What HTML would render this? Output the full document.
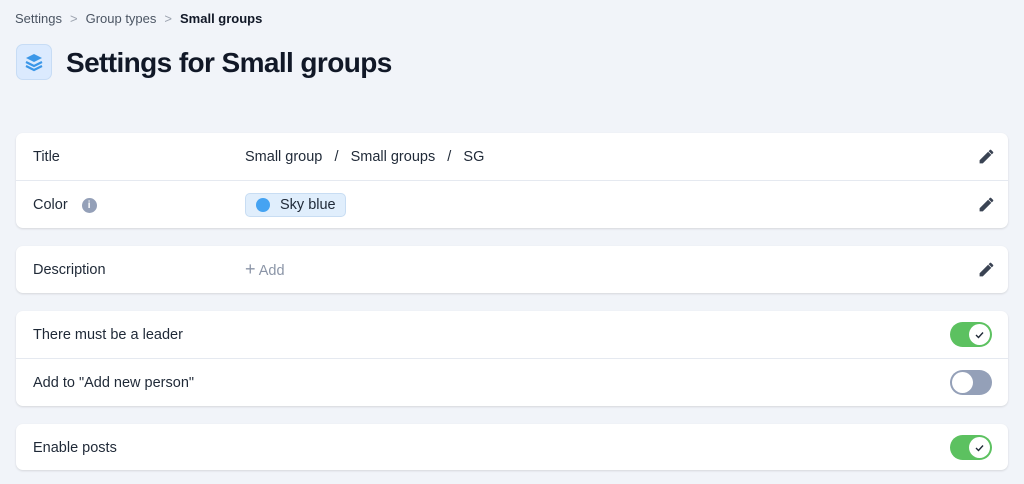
<!DOCTYPE html>
<html><head><meta charset="utf-8"><style>
body{margin:0;width:1024px;height:484px;background:#f1f4f9;font-family:"Liberation Sans",sans-serif;color:#1f2937;position:relative;overflow:hidden}
.bc{position:absolute;left:15px;top:11px;font-size:13px;color:#4b5563}
.bc b{color:#111827}
.bc span.s{color:#9ca3af;margin:0 8px}
.ic{position:absolute;left:16px;top:44px;width:36px;height:36px;border-radius:7px;background:#dbeafe;border:1px solid #c7dcf5;box-sizing:border-box}
h1{position:absolute;left:66px;top:47px;margin:0;font-size:28px;font-weight:bold;color:#111827;letter-spacing:-0.6px}
.card{position:absolute;left:16px;width:992px;background:#fff;border-radius:7px;box-shadow:0 1px 2px rgba(0,0,0,.12)}
.row{height:47px;position:relative;font-size:14.5px;border-top:1px solid #e5e9f0}
.row:first-child{border-top:none}
.l{position:absolute;left:17px;top:16px}
.v{position:absolute;left:229px;top:16px}
.pen{position:absolute;right:13px;top:15px}
.tg{position:absolute;right:16px;top:11px;width:42px;height:25px;border-radius:13px;background:#5cc160}
.tg i{position:absolute;right:2px;top:2px;width:21px;height:21px;border-radius:50%;background:#fff}
.tg.off{background:#94a0b8}.tg.off i{left:2px;right:auto}
.chip{position:absolute;left:229px;top:12px;height:22px;padding:0 9px 0 34px;border-radius:5px;background:#e0eefc;border:1px solid #c8ddf3;line-height:22px;color:#1f2937}
.chip:before{content:"";position:absolute;left:10px;top:4px;width:14px;height:14px;border-radius:50%;background:#45a3f2}
</style></head><body>
<div class="bc">Settings<span class="s">&gt;</span>Group types<span class="s">&gt;</span><b>Small groups</b></div>
<div class="ic"><svg width="34" height="34" viewBox="0 0 34 34" style="position:absolute;left:0;top:0"><path d="M17 9l8 4-8 4-8-4z" fill="#3b97e8"/><path d="M9 17l8 4 8-4" stroke="#3b97e8" stroke-width="2.2" fill="none"/><path d="M9 21l8 4 8-4" stroke="#3b97e8" stroke-width="2.2" fill="none"/></svg></div>
<h1>Settings for Small groups</h1>
<svg width="0" height="0" style="position:absolute"><defs><symbol id="p" viewBox="0 0 16 16"><path d="M1.5 11.5V14.5h3l8-8-3-3zM14.2 4.8a.8.8 0 000-1.1l-1.9-1.9a.8.8 0 00-1.1 0L10 3l3 3z" fill="#3a4353"/></symbol></defs></svg>
<div class="card" style="top:133px">
<div class="row"><span class="l">Title</span><span class="v">Small group &nbsp;&nbsp;/&nbsp;&nbsp; Small groups &nbsp;&nbsp;/&nbsp;&nbsp; SG</span><svg class="pen" width="17" height="17"><use href="#p"/></svg></div>
<div class="row"><span class="l">Color <span style="display:inline-block;width:15px;height:15px;border-radius:50%;background:#94a0b8;color:#fff;font-size:10px;text-align:center;line-height:15px;font-weight:bold;margin-left:10px;vertical-align:1px">i</span></span><span class="chip">Sky blue</span><svg class="pen" width="17" height="17"><use href="#p"/></svg></div>
</div>
<div class="card" style="top:246px">
<div class="row"><span class="l">Description</span><span class="v" style="color:#8b95a7"><span style="font-size:18px;line-height:14px">+</span> Add</span><svg class="pen" width="17" height="17"><use href="#p"/></svg></div>
</div>
<div class="card" style="top:311px">
<div class="row"><span class="l">There must be a leader</span><div class="tg"><i><svg width="21" height="21"><path d="M7 11l2.5 2.5L14 8.5" stroke="#1f2937" stroke-width="1.4" fill="none"/></svg></i></div></div>
<div class="row"><span class="l">Add to "Add new person"</span><div class="tg off"><i></i></div></div>
</div>
<div class="card" style="top:424px">
<div class="row" style="height:46px"><span class="l">Enable posts</span><div class="tg"><i><svg width="21" height="21"><path d="M7 11l2.5 2.5L14 8.5" stroke="#1f2937" stroke-width="1.4" fill="none"/></svg></i></div></div>
</div>
</body></html>
